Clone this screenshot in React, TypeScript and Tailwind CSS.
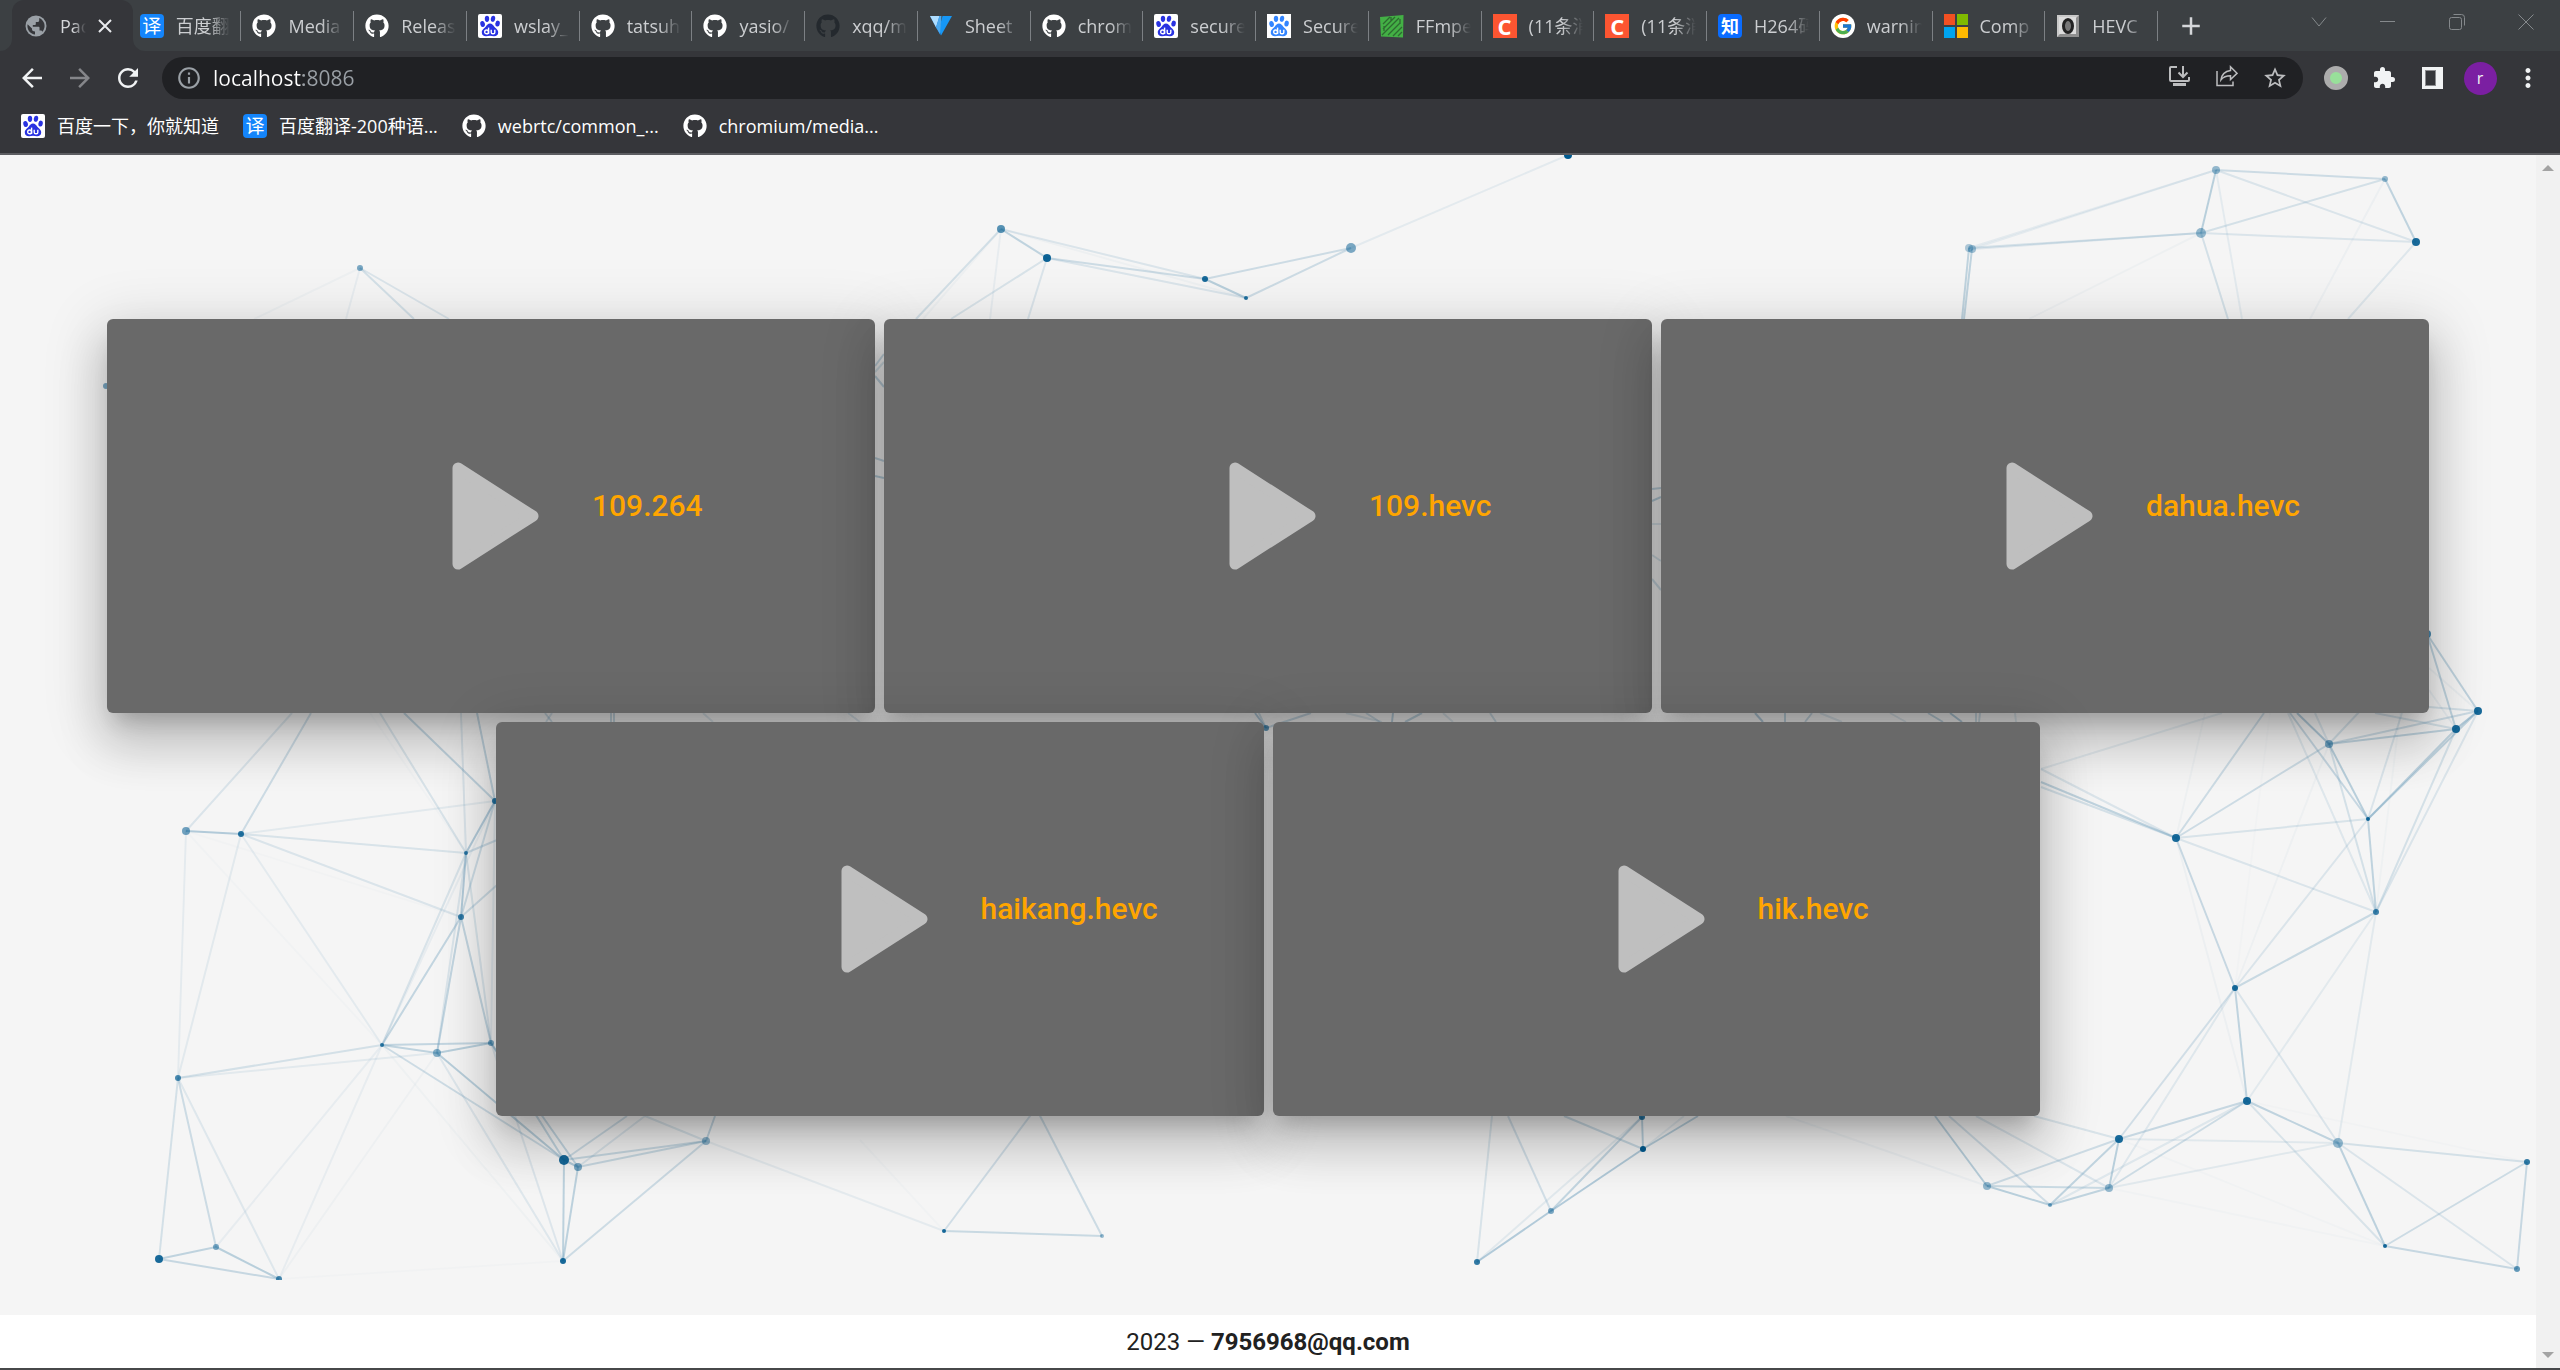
import type { ReactNode } from "react";
import {
  MdAdd,
  MdArrowBack,
  MdArrowForward,
  MdExtension,
  MdInfoOutline,
  MdMoreVert,
  MdRefresh,
  MdStarBorder,
} from "react-icons/md";
import { FaGithub } from "react-icons/fa";
import { FcGoogle } from "react-icons/fc";

/* ---------- favicons ---------- */

function GlobeIcon() {
  return (
    <svg viewBox="0 0 24 24" className="size-6 shrink-0" aria-hidden="true">
      <circle cx="12" cy="12" r="10.5" fill="#9aa0a6" />
      <path
        d="M11 20.6C6.600 20 3.400 16.400 3.400 12c0-.6.1-1.200.2-1.800L8 14.400v1.200c0 1.200 1.400 2 3 2v3z"
        fill="#35363a"
      />
      <path
        d="M15.200 4.100c3.200 1.300 5.400 4.400 5.400 7.900 0 2.200-.9 4.200-2.200 5.700-.3-.8-1-1.300-1.900-1.300h-1v-2.600c0-.6-.4-1-1-1H8.800v-1.900h2c.6 0 1-.5 1-1V8h1.800c1 0 1.600-.8 1.600-1.800z"
        fill="#35363a"
      />
    </svg>
  );
}

function GithubIcon({ dim = false }: { dim?: boolean }) {
  return (
    <FaGithub
      className={dim ? "size-6 shrink-0 text-[#24292e]" : "size-6 shrink-0 text-white"}
      aria-hidden="true"
    />
  );
}

function TileIcon({ text, className }: { text: string; className: string }) {
  return (
    <span className={`flex size-6 shrink-0 items-center justify-center leading-6 ${className}`}>
      {text}
    </span>
  );
}

const TranslateIcon = () => (
  <TileIcon text="译" className="rounded-sm bg-[#1485fb] text-[19px] text-white" />
);
const ZhihuIcon = () => (
  <TileIcon text="知" className="rounded bg-[#0a6cff] text-[18px] font-bold text-white" />
);
const CsdnIcon = () => (
  <TileIcon text="C" className="bg-[#fc5531] text-[22px] font-bold text-white" />
);

function PawIcon({ light = false }: { light?: boolean }) {
  const ink = light ? "#3385ff" : "#2932e1";
  return (
    <svg viewBox="0 0 24 24" className="size-6 shrink-0" aria-hidden="true">
      <rect width="24" height="24" rx={light ? 0 : 2} fill="#fff" />
      <g fill={ink}>
        <ellipse cx="4.600" cy="10" rx="2.300" ry="3" transform="rotate(-12 4.600 10)" />
        <ellipse cx="9" cy="4.800" rx="2.200" ry="3.100" />
        <ellipse cx="15" cy="4.800" rx="2.200" ry="3.100" transform="rotate(8 15 4.800)" />
        <ellipse cx="19.600" cy="9.600" rx="2.200" ry="3" transform="rotate(10 19.600 9.600)" />
        <path d="M12 9.600c2 0 3 1.400 4.100 2.900 1.200 1.600 4.100 2.900 4.100 5.900 0 2.600-2 3.900-4.300 3.800-1.500 0-2.500-.4-3.900-.4s-2.500.4-3.900.4c-2.300.1-4.300-1.200-4.300-3.800 0-3 2.900-4.300 4.100-5.900C9 11 10 9.600 12 9.600z" />
      </g>
      <g fill="none" stroke="#fff" strokeWidth="1.400">
        <path d="M10.600 13.600v6.300" />
        <circle cx="8.600" cy="17.900" r="1.900" />
        <path d="M13.200 15.800v2.400c0 1 .6 1.600 1.600 1.600h.6c.9 0 1.400-.5 1.400-1.400v-2.600" />
      </g>
    </svg>
  );
}

function SheetIcon() {
  return (
    <svg viewBox="0 0 24 24" className="size-6 shrink-0" aria-hidden="true">
      <path d="M1 2h10.500v19.500z" fill="#1976d2" />
      <path d="M1 2h9.500L7 13.500z" fill="#aeddff" />
      <path d="M13.500 2H23L12 21.500l-2-6.500z" fill="#1697f6" />
      <path d="M7 13.500 10.500 2l2 0-1.500 18z" fill="#4aa8ee" />
    </svg>
  );
}

function FfmpegIcon() {
  return (
    <svg viewBox="0 0 24 24" className="size-6 shrink-0" aria-hidden="true">
      <path d="M0 3 23.500 1l-.5 22.500L1 22.500z" fill="#43b045" />
      <g fill="none" stroke="#2d6a30" strokeWidth="1.300">
        <path d="M3 10 10 3M3 15 15 3M2 21 19 4M8 21 20 9M13 22l9-9M18 22l4-4M11 3v4M20 5v5M4 12v5" />
      </g>
    </svg>
  );
}

function MicrosoftIcon() {
  return (
    <svg viewBox="0 0 24 24" className="size-6 shrink-0" aria-hidden="true">
      <path d="M0 0h11v11H0z" fill="#f25022" />
      <path d="M13 0h11v11H13z" fill="#7fba00" />
      <path d="M0 13h11v11H0z" fill="#00a4ef" />
      <path d="M13 13h11v11H13z" fill="#ffb900" />
    </svg>
  );
}

function HevcIcon() {
  return (
    <svg viewBox="0 0 24 24" className="size-6 shrink-0" aria-hidden="true">
      <path d="M1 1h22v22H1z" fill="#c9c9c9" />
      <path d="M1 23h22V1l-3 3v16H4z" fill="#8f8f8f" />
      <path d="M3 3h17v17H3z" fill="#dcdcdc" />
      <ellipse cx="12" cy="12" rx="4.500" ry="6.500" fill="#777" stroke="#222" strokeWidth="3" />
    </svg>
  );
}

/* ---------- browser chrome ---------- */

const tabs: { title: string; icon: ReactNode }[] = [
  { title: "百度翻", icon: <TranslateIcon /> },
  { title: "Media", icon: <GithubIcon /> },
  { title: "Releas", icon: <GithubIcon /> },
  { title: "wslay_", icon: <PawIcon /> },
  { title: "tatsuh", icon: <GithubIcon /> },
  { title: "yasio/", icon: <GithubIcon /> },
  { title: "xqq/m", icon: <GithubIcon dim /> },
  { title: "Sheet", icon: <SheetIcon /> },
  { title: "chrom", icon: <GithubIcon /> },
  { title: "secure", icon: <PawIcon /> },
  { title: "Secure", icon: <PawIcon light /> },
  { title: "FFmpe", icon: <FfmpegIcon /> },
  { title: "(11条消", icon: <CsdnIcon /> },
  { title: "(11条消", icon: <CsdnIcon /> },
  { title: "H264码", icon: <ZhihuIcon /> },
  {
    title: "warnin",
    icon: (
      <span className="flex size-6 shrink-0 items-center justify-center rounded-full bg-white">
        <FcGoogle className="size-5" aria-hidden="true" />
      </span>
    ),
  },
  { title: "Comp", icon: <MicrosoftIcon /> },
  { title: "HEVC", icon: <HevcIcon /> },
];

const bookmarks: { title: string; icon: ReactNode }[] = [
  { title: "百度一下，你就知道", icon: <PawIcon /> },
  { title: "百度翻译-200种语...", icon: <TranslateIcon /> },
  { title: "webrtc/common_...", icon: <GithubIcon /> },
  { title: "chromium/media...", icon: <GithubIcon /> },
];

function TabStrip() {
  return (
    <div className="flex h-[51px] bg-[#3c4043]">
      <div className="grid flex-1 grid-cols-[repeat(19,minmax(0,1fr))] pl-4" role="tablist">
        <div className="relative z-10 -mx-1 flex items-center rounded-t-xl bg-[#35363a] px-3">
          <svg
            viewBox="0 0 12 12"
            className="absolute bottom-0 -left-3 size-3 text-[#35363a]"
            aria-hidden="true"
          >
            <path d="M12 0v12H0A12 12 0 0 0 12 0z" fill="currentColor" />
          </svg>
          <svg
            viewBox="0 0 12 12"
            className="absolute -right-3 bottom-0 size-3 text-[#35363a]"
            aria-hidden="true"
          >
            <path d="M0 0v12h12A12 12 0 0 1 0 0z" fill="currentColor" />
          </svg>
          <button
            type="button"
            role="tab"
            aria-selected="true"
            className="flex min-w-0 flex-1 items-center gap-3"
          >
            <GlobeIcon />
            <span className="w-[26px] overflow-hidden text-left whitespace-nowrap text-[#d5d7da] [mask-image:linear-gradient(to_right,#000_50%,transparent)]">
              Pac
            </span>
          </button>
          <button type="button" aria-label="Close tab" className="mr-2 shrink-0 text-[#e8eaed]">
            <svg viewBox="0 0 16 16" className="size-4" aria-hidden="true">
              <path d="M2 2l12 12M14 2 2 14" stroke="currentColor" strokeWidth="2" fill="none" />
            </svg>
          </button>
        </div>
        {tabs.map((tab, i) => (
          <div key={i} className="flex items-center">
            <button
              type="button"
              role="tab"
              aria-selected="false"
              className="flex min-w-0 flex-1 items-center gap-3 pr-2.5 pl-[11px]"
            >
              {tab.icon}
              <span className="min-w-0 flex-1 overflow-hidden text-left whitespace-nowrap text-[#ccced1] [mask-image:linear-gradient(to_right,#000_60%,transparent)]">
                {tab.title}
              </span>
            </button>
            <span className="h-[30px] w-px bg-[#7c8084]" />
          </div>
        ))}
      </div>
      <div className="flex w-[402px] items-center">
        <button type="button" aria-label="New tab" className="ml-[18px] text-[#d5d7da]">
          <MdAdd className="size-[30px]" />
        </button>
        <div className="ml-auto flex h-full pb-2 text-[#85898c]">
          <button
            type="button"
            aria-label="Search tabs"
            className="flex w-[69px] items-center justify-center"
          >
            <svg viewBox="0 0 16 10" className="h-2.5 w-4" fill="none" stroke="currentColor" aria-hidden="true">
              <path d="M1 .5 8 9 15 .5" />
            </svg>
          </button>
          <button
            type="button"
            aria-label="Minimize"
            className="flex w-[69px] items-center justify-center"
          >
            <span className="h-px w-[15px] bg-current" />
          </button>
          <button
            type="button"
            aria-label="Restore"
            className="flex w-[69px] items-center justify-center"
          >
            <svg viewBox="0 0 16 16" className="size-4" fill="none" stroke="currentColor" aria-hidden="true">
              <rect x=".5" y="3.500" width="12" height="12" rx="2" />
              <path d="M4.500.5h8a3 3 0 0 1 3 3v8" />
            </svg>
          </button>
          <button
            type="button"
            aria-label="Close window"
            className="flex w-[69px] items-center justify-center"
          >
            <svg viewBox="0 0 16 16" className="size-4" fill="none" stroke="currentColor" aria-hidden="true">
              <path d="M.5.5l15 15M15.500.5l-15 15" />
            </svg>
          </button>
        </div>
      </div>
    </div>
  );
}

function Toolbar() {
  return (
    <div className="flex h-[54px] items-center pr-2 pl-2">
      <button type="button" aria-label="Back" className="flex w-12 justify-center text-[#f1f3f4]">
        <MdArrowBack className="size-[30px]" />
      </button>
      <button type="button" aria-label="Forward" className="flex w-12 justify-center text-[#85868a]">
        <MdArrowForward className="size-[30px]" />
      </button>
      <button type="button" aria-label="Reload" className="flex w-12 justify-center text-[#f1f3f4]">
        <MdRefresh className="size-[30px]" />
      </button>
      <div className="ml-2.5 flex h-[42px] flex-1 items-center rounded-full bg-[#202124] pr-1 pl-3.5">
        <MdInfoOutline className="size-[26px] shrink-0 text-[#9aa0a6]" aria-hidden="true" />
        <input
          type="text"
          aria-label="Address"
          defaultValue="localhost:8086"
          className="ml-[11px] w-0 flex-1 bg-[linear-gradient(to_right,#fff_90px,#9aa0a6_90px)] bg-clip-text text-[21px] text-transparent outline-none"
        />
        <div className="flex text-[#bcbdbf]">
          <button type="button" aria-label="Install app" className="flex w-12 justify-center">
            <svg viewBox="0 0 22 22" className="size-[22px]" fill="none" stroke="currentColor" strokeWidth="2" aria-hidden="true">
              <path d="M9 2H3a1 1 0 0 0-1 1v12a1 1 0 0 0 1 1h17a1 1 0 0 0 1-1v-3" />
              <path d="M15 1v10M10.500 7.500 15 12l4.500-4.500" />
              <path d="M5 19.500h13" strokeWidth="3" />
            </svg>
          </button>
          <button type="button" aria-label="Share" className="flex w-12 justify-center">
            <svg viewBox="0 0 22 22" className="size-[22px]" fill="none" stroke="currentColor" aria-hidden="true">
              <path d="M1 6v14.500h16v-4" strokeWidth="1.500" />
              <path d="M14.500 1.800 21 8.300l-6.500 6.200v-3.700c-4.500 0-7.300 1.200-9.500 4 .6-4.500 3.300-8.400 9.500-9.300z" strokeWidth="1.500" />
            </svg>
          </button>
          <button type="button" aria-label="Bookmark" className="flex w-12 justify-center">
            <MdStarBorder className="size-[26px]" />
          </button>
        </div>
      </div>
      <div className="flex items-center pl-[9px] text-[#f1f3f4]">
        <button type="button" aria-label="Recording extension" className="flex w-12 justify-center">
          <span className="size-6 rounded-full border-6 border-[#acacac] bg-[#98e09a]" />
        </button>
        <button type="button" aria-label="Extensions" className="flex w-12 justify-center">
          <MdExtension className="size-6" />
        </button>
        <button type="button" aria-label="Side panel" className="flex w-12 justify-center">
          <span className="flex h-[22px] w-[21px] bg-current py-[3px] pl-[3px]">
            <span className="w-[11px] border border-[#8a8b8e] bg-[#35363a]" />
          </span>
        </button>
        <button type="button" aria-label="Profile" className="flex w-12 justify-center">
          <span className="flex size-[33px] items-center justify-center rounded-full bg-[#7b1fa2] text-base leading-none">
            r
          </span>
        </button>
        <button type="button" aria-label="Menu" className="flex w-12 justify-center">
          <MdMoreVert className="size-[30px]" />
        </button>
      </div>
    </div>
  );
}

function BookmarksBar() {
  return (
    <nav className="flex h-[50px] items-center gap-6 border-b-2 border-[#5c5d61] pb-1.5 pl-[21px] text-white" aria-label="Bookmarks">
      {bookmarks.map((b) => (
        <a key={b.title} href="#" className="flex items-center gap-3 whitespace-nowrap">
          {b.icon}
          {b.title}
        </a>
      ))}
    </nav>
  );
}

/* ---------- particle network ---------- */

type Dot = [x: number, y: number, r: number, o: number];

const dots: Record<string, Dot> = {
  a: [360, 268, 3, 0.5], a2: [106, 386, 3, 0.5],
  b: [1001, 229, 4, 0.65], c: [1047, 258, 4, 0.95], d: [1205, 279, 3, 0.9],
  e: [1246, 298, 2, 0.85], f: [1351, 248, 5, 0.5], g: [1568, 155, 4, 1],
  m: [1266, 728, 3, 0.6],
  h: [2216, 170, 4, 0.4], i: [2385, 179, 3, 0.4], j: [2201, 233, 5, 0.4],
  k: [2416, 242, 4, 0.9], l: [1969, 248, 4, 0.3], l2: [1972, 249, 4, 0.35],
  n0: [2427, 634, 4, 0.7], n1: [2478, 711, 4, 0.9], n2: [2456, 729, 4, 0.9],
  n3: [2329, 744, 4, 0.5], n4: [2368, 819, 2, 0.9], n5: [2176, 838, 4, 0.9],
  n6: [2376, 912, 3, 0.75], n7: [2235, 988, 3, 0.9], n8: [2247, 1101, 4, 0.9],
  n9: [2119, 1139, 4, 0.9], n10: [2109, 1188, 4, 0.4], n11: [1987, 1186, 4, 0.4],
  n12: [2050, 1205, 2, 0.5], n13: [2338, 1143, 5, 0.4], n14: [2527, 1162, 3, 0.8],
  n15: [2385, 1246, 2, 0.9], n16: [2517, 1269, 3, 0.6],
  p1: [186, 831, 4, 0.55], p2: [241, 834, 3, 0.85], p3: [495, 801, 3, 0.8],
  p4: [466, 853, 2, 0.75], p5: [461, 917, 3, 0.75], p6: [382, 1045, 2, 0.8],
  p7: [437, 1053, 4, 0.45], p8: [491, 1043, 3, 0.5], p9: [178, 1078, 3, 0.7],
  p10: [159, 1259, 4, 0.9], p11: [216, 1247, 3, 0.5], p12: [279, 1279, 3, 0.7],
  p13: [564, 1160, 5, 0.9], p14: [578, 1167, 4, 0.5], p15: [563, 1261, 3, 0.9],
  p16: [706, 1141, 4, 0.4],
  q1: [944, 1231, 2, 0.9], q2: [1102, 1236, 2, 0.4], q3: [1551, 1211, 3, 0.5],
  q4: [1477, 1262, 3, 0.8], q5: [1643, 1149, 3, 1], q6: [1642, 1117, 3, 0.8],
};

/* Each link is "from to opacity"; the far end is a dot's name or an x,y point. */
const links = `
a 254,319 .06|a 346,319 .1|a 414,319 .25|a 449,319 .2
b 916,319 .25|b 990,319 .1|b 923,319 .06|c 951,319 .22|c 1028,319 .2
b c .4|b d .2|c d .3|c e .2|b e .06|d e .45|d f .3|e f .3|f g .13
h i .3|h j .45|h k .2|i j .25|i k .4|j k .2|l h .13|l2 h .13|l j .25|l2 j .18
h 2242,319 .13|j 2228,319 .25|j 2029,319 .06|i 2310,319 .07|k 2348,319 .17|l 1962,319 .4|l2 1964,319 .4
n0 n1 .4|n0 n2 .4|n1 2429,707 .25|n1 n2 .5|n1 n3 .3|n2 n3 .4|n1 n4 .4|n2 n4 .4|n1 n6 .2|n2 n6 .25
n2 2375,713 .25|n2 2429,690 .1|n1 2429,668 .08|n3 n4 .45|n3 n5 .3|n3 n6 .25|n3 n7 .06|n3 2297,713 .5|n3 2315,713 .2|n3 2360,711 .25
n4 n5 .22|n4 n6 .4|n4 n7 .2|n4 2290,713 .35|n4 2402,713 .2|n6 2288,713 .17|n6 2400,713 .05|n7 2270,713 .03
n5 2264,713 .3|n5 2205,713 .06|n5 2041,782 .4|n5 2041,769 .2|n5 2041,787 .25|n5 n6 .2|n5 n7 .35|n5 n8 .07
2041,769 2222,713 .14|n6 n7 .33|n6 n8 .14|n6 n13 .14|n7 n8 .4|n7 n9 .27|n7 n10 .17|n7 n13 .2
n8 n9 .35|n8 n10 .3|n8 n12 .17|n8 n13 .4|n8 n15 .22|n8 n14 .03|n9 n10 .45|n9 n11 .3|n9 n12 .4|n9 n13 .15|n9 n15 .04|n9 2034,1116 .22
n10 n11 .33|n10 n12 .4|n10 n13 .15|n10 n15 .04|n10 1976,1116 .2|n11 n12 .45|n11 1935,1116 .45|n11 1786,1116 .07|n12 1949,1116 .27
n13 n14 .25|n13 n15 .42|n13 n16 .2|n14 n15 .3|n14 n16 .35|n15 n16 .35
p1 p2 .5|p1 292,713 .2|p2 311,713 .3|p1 p9 .12|p2 p9 .14|p2 p3 .14|p2 p4 .22|p2 p5 .2|p2 p6 .13|p1 p6 .04|p1 p5 .03
p3 404,713 .38|p3 477,713 .38|p4 380,713 .22|p4 461,713 .2|p4 370,713 .04|p3 p4 .5|p3 p5 .3|p4 p5 .5|p4 p6 .22|p4 p7 .2|p4 p8 .22
p5 p6 .38|p5 p7 .38|p5 p8 .38|p3 p8 .14|p3 p6 .1|p4 497,840 .3|p5 497,885 .3|p6 p7 .4|p6 p8 .38|p7 p8 .45|p6 p9 .25|p7 p9 .14
p6 p13 .3|p7 p13 .45|p6 p11 .1|p6 p12 .1|p7 p12 .06|p6 p15 .05|p7 p15 .17|p9 p10 .25|p9 p11 .3|p9 p12 .17|p10 p11 .4|p10 p12 .35|p11 p12 .45
p8 p13 .38|p8 p14 .38|p8 p15 .18|p13 p14 .5|p13 p15 .42|p14 p15 .42|p13 p16 .33|p14 p16 .33|p15 p16 .3|p12 p15 .03
p13 627,1116 .3|p14 645,1116 .2|p16 645,1116 .22|p16 715,1116 .38|p16 q1 .12|q1 860,1140 .04
q1 1036,1108 .27|q2 1036,1108 .3|q1 q2 .33|q4 1492,1116 .22|q3 1508,1116 .27|q3 q5 .5|q3 q4 .5|q3 q6 .38|q4 q6 .15|q5 q6 .45
q5 1564,1116 .33|q5 1698,1116 .45|q5 1684,1116 .14
m 1255,713 .5|m 1311,713 .35|m 1255,705 .3|1346,713 1382,722 .2|1366,713 1380,722 .3|1393,713 1392,722 .45|1422,713 1405,722 .4|1443,713 1453,722 .2|1490,713 1496,722 .3
545,713 552,722 .3|552,713 546,722 .25|611,713 611,722 .35|614,713 614,722 .35|703,713 713,722 .2|848,713 860,722 .2
1755,713 1763,722 .5|1785,713 1785,722 .4|1812,713 1805,722 .35|1820,713 1842,722 .2|1890,713 1906,722 .2|1928,713 1943,722 .4|1950,713 1962,722 .5|1976,713 1976,722 .3|1980,713 1979,722 .3|2015,713 2016,722 .2
875,366 884,354 .35|875,372 884,362 .25|875,376 884,387 .4|875,458 884,461 .4|875,476 884,478 .45
1652,489 1661,488 .4|1652,501 1661,497 .45|1652,524 1661,524 .2|1652,555 1661,561 .25|1652,579 1661,590 .3`
  .trim()
  .split(/[|\n]/)
  .map((row) => row.split(" "));

function point(ref: string): [number, number] {
  if (ref.includes(",")) {
    const [x, y] = ref.split(",").map(Number);
    return [x, y];
  }
  return [dots[ref][0], dots[ref][1]];
}

function ParticleNetwork() {
  return (
    <svg viewBox="0 155 2536 1125" className="absolute inset-x-0 top-0 w-full" aria-hidden="true">
      <g stroke="#005a8f" strokeWidth="2" opacity="0.55">
        {links.map(([from, to, opacity], i) => {
          const [x1, y1] = point(from);
          const [x2, y2] = point(to);
          return <line key={i} x1={x1} y1={y1} x2={x2} y2={y2} strokeOpacity={opacity} />;
        })}
      </g>
      <g fill="#005a8f">
        {Object.entries(dots).map(([name, [x, y, r, o]]) => (
          <circle key={name} cx={x} cy={y} r={r} fillOpacity={o} />
        ))}
      </g>
    </svg>
  );
}

/* ---------- page ---------- */

const videos = ["109.264", "109.hevc", "dahua.hevc", "haikang.hevc", "hik.hevc"];

function VideoCard({ name }: { name: string }) {
  return (
    <button
      type="button"
      className="relative flex h-[394px] w-[calc((100%-18px)/3)] items-center gap-[52px] rounded-md bg-[#696969] pl-[345px] shadow-[0_15px_20px_-9px_rgba(0,0,0,0.2),0_30px_47px_5px_rgba(0,0,0,0.14),0_12px_57px_11px_rgba(0,0,0,0.12)]"
    >
      <svg viewBox="0 0 88 108" className="h-[108px] w-[88px] shrink-0" aria-hidden="true">
        <path
          d="M6 6v96L81 54z"
          fill="#bfbfbf"
          stroke="#bfbfbf"
          strokeWidth="11"
          strokeLinejoin="round"
        />
      </svg>
      <span className="pb-5 text-[30px] leading-9 font-medium text-[#ffa500]">{name}</span>
    </button>
  );
}

export default function App() {
  return (
    <div className="flex min-h-screen flex-col bg-white font-['Open_Sans','Noto_Sans_CJK_SC',sans-serif] text-[18px] leading-6">
      <header className="bg-[#35363a]">
        <TabStrip />
        <Toolbar />
        <BookmarksBar />
      </header>
      <div className="flex flex-1 border-b-2 border-[#47484a] font-['Roboto',sans-serif]">
        <div className="flex min-w-0 flex-1 flex-col">
          <main className="relative bg-[#f5f5f5]">
            <ParticleNetwork />
            <div className="flex flex-wrap justify-center gap-[9px] px-[107px] pt-[164px] pb-[199px]">
              {videos.map((name) => (
                <VideoCard key={name} name={name} />
              ))}
            </div>
          </main>
          <footer className="flex flex-1 items-center justify-center text-2xl text-[#212121]">
            <p>
              2023 — <strong className="font-bold">7956968@qq.com</strong>
            </p>
          </footer>
        </div>
        <div className="flex w-6 flex-col items-center justify-between bg-[#f1f1f1] py-2.5 text-[#a3a3a3]">
          <button type="button" aria-label="Scroll up">
            <svg viewBox="0 0 12 6" className="h-1.5 w-3" aria-hidden="true">
              <path d="M6 0l6 6H0z" fill="currentColor" />
            </svg>
          </button>
          <button type="button" aria-label="Scroll down">
            <svg viewBox="0 0 12 6" className="h-1.5 w-3" aria-hidden="true">
              <path d="M0 0h12L6 6z" fill="currentColor" />
            </svg>
          </button>
        </div>
      </div>
    </div>
  );
}
